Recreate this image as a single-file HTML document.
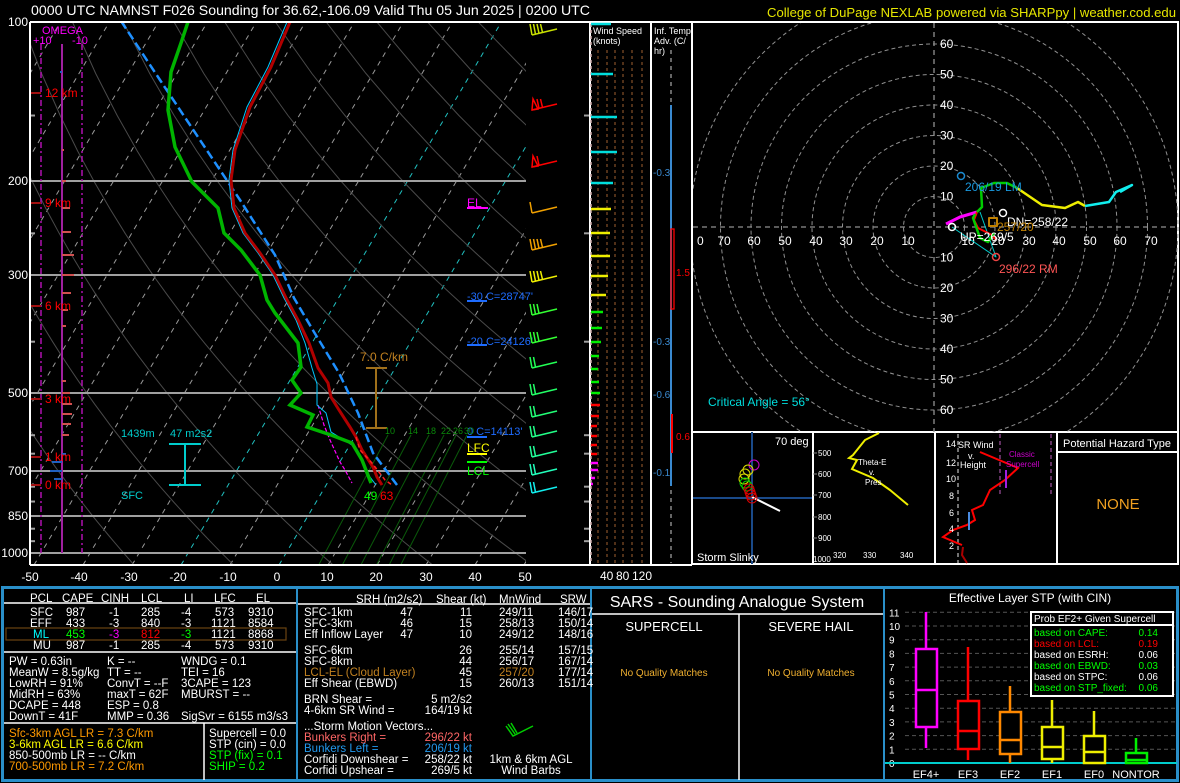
<!DOCTYPE html>
<html><head><meta charset="utf-8">
<style>
html,body{margin:0;padding:0;background:#000;overflow:hidden;width:1180px;height:783px}
svg{display:block}
text{font-family:"Liberation Sans",sans-serif;}
</style></head>
<body>
<svg id="s" width="1180" height="783" viewBox="0 0 1180 783" xmlns="http://www.w3.org/2000/svg">
<defs><clipPath id="skc"><rect x="30" y="22" width="496" height="543"/></clipPath>
<clipPath id="hoc"><rect x="693" y="23" width="486" height="409"/></clipPath></defs>
<rect width="1180" height="783" fill="#000"/>
<text x="31" y="15" fill="#fff" font-size="14" textLength="559" lengthAdjust="spacingAndGlyphs">0000 UTC NAMNST F026 Sounding for 36.62,-106.09 Valid  Thu 05 Jun 2025 | 0200 UTC</text>
<text x="767" y="17" fill="#e6e600" font-size="13" textLength="409" lengthAdjust="spacingAndGlyphs">College of DuPage NEXLAB powered via SHARPpy | weather.cod.edu</text>

<g id="grid" clip-path="url(#skc)"></g>
<g stroke="#a0a0a0" stroke-width="2">
<line x1="30" y1="181" x2="526" y2="181"/><line x1="30" y1="275" x2="526" y2="275"/>
<line x1="30" y1="393" x2="526" y2="393"/><line x1="30" y1="471" x2="526" y2="471"/>
<line x1="30" y1="516" x2="526" y2="516"/><line x1="30" y1="553" x2="526" y2="553"/>
</g>
<g stroke="#a0a0a0" stroke-width="2" id="pticks"></g>
<g font-size="12" fill="#fff" text-anchor="end">
<text x="28" y="26">100</text><text x="28" y="185">200</text><text x="28" y="279">300</text>
<text x="28" y="397">500</text><text x="28" y="475">700</text><text x="28" y="520">850</text><text x="28" y="557">1000</text>
</g>
<g font-size="12" fill="#fff" text-anchor="middle">
<text x="30" y="581">-50</text><text x="79" y="581">-40</text><text x="129" y="581">-30</text><text x="178" y="581">-20</text>
<text x="228" y="581">-10</text><text x="277" y="581">0</text><text x="327" y="581">10</text><text x="376" y="581">20</text>
<text x="426" y="581">30</text><text x="475" y="581">40</text><text x="525" y="581">50</text>
</g>
<line x1="62" y1="44" x2="62" y2="553" stroke="#a020a0" stroke-width="2"/>
<line x1="41" y1="44" x2="41" y2="553" stroke="#b010b0" stroke-width="1.5" stroke-dasharray="6,3,2,3"/>
<line x1="82" y1="44" x2="82" y2="553" stroke="#b010b0" stroke-width="1.5" stroke-dasharray="6,3,2,3"/>
<text x="42" y="34" fill="#f0f" font-size="11">OMEGA</text>
<text x="33" y="44" fill="#f0f" font-size="11">+10</text><text x="72" y="44" fill="#f0f" font-size="11">-10</text>
<g stroke="#d05050" stroke-width="2">
<line x1="62" y1="150" x2="64" y2="150"/><line x1="62" y1="181" x2="66" y2="181"/><line x1="62" y1="208" x2="70" y2="208"/>
<line x1="62" y1="232" x2="71" y2="232"/><line x1="62" y1="255" x2="74" y2="255"/><line x1="62" y1="275" x2="74" y2="275"/>
<line x1="62" y1="293" x2="71" y2="293"/><line x1="62" y1="310" x2="68" y2="310"/><line x1="62" y1="326" x2="66" y2="326"/>
<line x1="62" y1="381" x2="66" y2="381"/><line x1="62" y1="393" x2="70" y2="393"/><line x1="62" y1="404" x2="72" y2="404"/>
<line x1="62" y1="414" x2="72" y2="414"/><line x1="62" y1="424" x2="71" y2="424"/><line x1="62" y1="435" x2="69" y2="435"/>
</g>
<g stroke="#2060c0" stroke-width="2"><line x1="60" y1="72" x2="62" y2="72"/><line x1="62" y1="454" x2="66" y2="454"/><line x1="52" y1="462" x2="62" y2="462"/><line x1="50" y1="471" x2="62" y2="471"/><line x1="54" y1="479" x2="62" y2="479"/></g>
<g stroke="#a01010" stroke-width="2">
<line x1="30" y1="93" x2="41" y2="93"/><line x1="30" y1="203" x2="41" y2="203"/><line x1="30" y1="306" x2="41" y2="306"/>
<line x1="30" y1="399" x2="41" y2="399"/><line x1="30" y1="457" x2="41" y2="457"/><line x1="30" y1="485" x2="41" y2="485"/>
</g>
<g fill="#f00" font-size="12">
<text x="45" y="97">12 km</text><text x="45" y="207">9 km</text><text x="45" y="310">6 km</text>
<text x="45" y="403">3 km</text><text x="45" y="461">1 km</text><text x="45" y="489">0 km</text>
</g>
<g clip-path="url(#skc)" fill="none">
<polyline stroke="#ff00ff" stroke-width="1.2" stroke-dasharray="4,2" points="318,405 324,425 330,440 340,462 345,470 352,483"/>
<polyline stroke="#00c8ff" stroke-width="1" points="287,22 268,67 247,107 233,150 229,180 232,208 243,233 258,253 273,275 284,298 296,320 305,343 312,368 317,384 317,405 326,413 331,432 352,445 362,460 370,477 376,485"/>
<polyline stroke="#1e90ff" stroke-width="2.5" stroke-dasharray="9,4" points="121,21 160,80 200,140 240,200 275,255 294,298 314,332 339,373 358,413 373,453 397,485"/>
<polyline stroke="#b00000" stroke-width="3" points="290,22 271,67 250,107 235,150 231,180 234,208 245,233 260,253 275,275 286,298 298,320 309,343 318,368 328,383 331,397 339,410 350,427 356,437 362,450 373,467 377,477 382,485"/>
<polyline stroke="#ff2020" stroke-width="1.5" stroke-dasharray="4,3" points="356,437 360,450 372,463 385,480 392,485"/>
<polyline stroke="#00b400" stroke-width="3.5" points="188,22 181,43 171,72 168,110 175,147 192,182 205,195 218,208 224,233 241,250 260,275 267,300 275,313 298,343 301,367 292,380 301,393 290,405 313,415 307,427 331,435 352,443 362,460 371,483"/>
</g>
<text x="364" y="500" fill="#0f0" font-size="12">49</text><text x="380" y="500" fill="#f00" font-size="12">63</text>
<text x="467" y="207" fill="#f0f" font-size="12">EL</text><line x1="467" y1="208" x2="488" y2="208" stroke="#f0f" stroke-width="2"/>
<text x="467" y="300" fill="#1e6cff" font-size="11">-30 C=28747'</text><line x1="467" y1="301" x2="487" y2="301" stroke="#1e6cff" stroke-width="2"/>
<text x="467" y="345" fill="#1e6cff" font-size="11">-20 C=24126'</text><line x1="467" y1="345" x2="487" y2="345" stroke="#1e6cff" stroke-width="2"/>
<text x="467" y="435" fill="#1e6cff" font-size="11">0 C=14113'</text><line x1="467" y1="437" x2="487" y2="437" stroke="#1e6cff" stroke-width="2"/>
<text x="467" y="452" fill="#ff0" font-size="12">LFC</text><line x1="467" y1="454" x2="487" y2="454" stroke="#ff0" stroke-width="2"/>
<line x1="467" y1="462" x2="487" y2="462" stroke="#0f0" stroke-width="2"/><text x="467" y="475" fill="#0f0" font-size="12">LCL</text>
<text x="360" y="361" fill="#c08020" font-size="12">7.0 C/km</text>
<g stroke="#a0701a" stroke-width="2"><line x1="376" y1="368" x2="376" y2="428"/><line x1="366" y1="368" x2="387" y2="368"/><line x1="366" y1="428" x2="387" y2="428"/></g>
<text x="121" y="437" fill="#0cc" font-size="11">1439m</text><text x="170" y="437" fill="#0cc" font-size="11">47 m2s2</text>
<g stroke="#0cc" stroke-width="2"><line x1="185" y1="444" x2="185" y2="485"/><line x1="169" y1="444" x2="201" y2="444"/><line x1="169" y1="485" x2="201" y2="485"/></g>
<text x="121" y="499" fill="#0cc" font-size="11">SFC</text>
<g fill="#0a8a0a" font-size="9"><text x="385" y="434">10</text><text x="408" y="434">14</text><text x="426" y="434">18</text><text x="441" y="434">22</text><text x="453" y="434">26</text><text x="464" y="434">30</text></g>
<g id="barbs"></g>
<g stroke="#fff" stroke-width="2" fill="none">
<line x1="30" y1="22" x2="1179" y2="22"/><line x1="30" y1="22" x2="30" y2="565"/><line x1="30" y1="565" x2="692" y2="565"/>
<line x1="590" y1="22" x2="590" y2="565"/><line x1="651" y1="22" x2="651" y2="565"/><line x1="692" y1="22" x2="692" y2="565"/>
<line x1="1178" y1="22" x2="1178" y2="565"/><line x1="692" y1="432" x2="1178" y2="432"/><line x1="692" y1="564" x2="1178" y2="564"/>
<line x1="813" y1="432" x2="813" y2="564"/><line x1="935" y1="432" x2="935" y2="564"/><line x1="1057" y1="432" x2="1057" y2="564"/>
</g>
<g id="wsc" stroke="#6a4020" stroke-width="1.5" stroke-dasharray="3,3"></g>
<text x="593" y="34" fill="#fff" font-size="9">Wind Speed</text><text x="593" y="44" fill="#fff" font-size="9">(knots)</text>
<g id="wsb" stroke-width="2.5"></g>
<g fill="#fff" font-size="12"><text x="600" y="580">40</text><text x="616" y="580">80</text><text x="632" y="580">120</text></g>
<text x="654" y="34" fill="#fff" font-size="9">Inf. Temp.</text><text x="654" y="44" fill="#fff" font-size="9">Adv. (C/</text><text x="654" y="54" fill="#fff" font-size="9">hr)</text>
<line x1="671" y1="50" x2="671" y2="563" stroke="#888" stroke-width="1.5" stroke-dasharray="4,4"/>
<line x1="671" y1="105" x2="671" y2="486" stroke="#3a8ad0" stroke-width="2"/>
<rect x="671" y="229" width="3" height="80" fill="none" stroke="#f00" stroke-width="1.3"/>
<line x1="672" y1="414" x2="672" y2="453" stroke="#f00" stroke-width="2"/>
<g font-size="10"><text x="653" y="176" fill="#3a8ad0">-0.3</text><text x="676" y="276" fill="#f00">1.5</text>
<text x="653" y="345" fill="#3a8ad0">-0.3</text><text x="653" y="398" fill="#3a8ad0">-0.6</text>
<text x="676" y="440" fill="#f00">0.6</text><text x="653" y="476" fill="#3a8ad0">-0.1</text></g>
<g clip-path="url(#hoc)" id="hodo" fill="none" stroke="#909090" stroke-width="1" stroke-dasharray="4,3"></g>
<g stroke="#909090" stroke-dasharray="5,4" stroke-width="1.3"><line x1="934" y1="23" x2="934" y2="432"/><line x1="693" y1="227" x2="1178" y2="227"/></g>
<g fill="#fff" font-size="12" id="hlab"></g>
<g fill="none" stroke-linejoin="round">
<polyline stroke="#00cccc" stroke-width="1" points="952,227 996,257 980,212"/>
<polyline stroke="#f0f" stroke-width="3" points="946,224 960,217 977,212"/>
<polyline stroke="#f00" stroke-width="2" points="977,212 974,220 978,228 992,235 996,240"/>
<polyline stroke="#0c0" stroke-width="2.5" points="977,212 982,207 981,188 994,183 1007,183 1017,188"/>
<polyline stroke="#0c0" stroke-width="2.5" points="975,214 973,218 980,238 988,242 994,233"/>
<polyline stroke="#ee0" stroke-width="2.5" points="1017,188 1042,205 1065,208 1078,202 1085,206"/>
<polyline stroke="#1ee" stroke-width="2.5" points="1085,206 1109,202 1116,192 1132,185 1120,192"/>
<circle cx="1003" cy="213" r="3.5" stroke="#fff" stroke-width="1.5"/><circle cx="952" cy="227" r="3.5" stroke="#fff" stroke-width="1.5"/>
<circle cx="961" cy="176" r="3.5" stroke="#1a8ad0" stroke-width="1.5"/><circle cx="996" cy="257" r="3.5" stroke="#e44" stroke-width="1.5"/>
<rect x="989" y="218" width="8" height="8" stroke="#c08000" stroke-width="2"/>
</g>
<g font-size="12"><text x="965" y="191" fill="#1a9ae0">206/19 LM</text><text x="1007" y="226" fill="#fff">DN=258/22</text>
<text x="997" y="231" fill="#c08000">257/20</text><text x="960" y="241" fill="#fff">UP=269/5</text><text x="999" y="273" fill="#f55">296/22 RM</text>
<text x="708" y="406" fill="#0dd">Critical Angle = 56°</text></g>
<line x1="752" y1="432" x2="752" y2="564" stroke="#1a4a8a" stroke-width="2"/><line x1="693" y1="498" x2="812" y2="498" stroke="#1a4a8a" stroke-width="2"/>
<line x1="752" y1="497" x2="780" y2="511" stroke="#fff" stroke-width="2"/>
<g fill="none" stroke-width="1">
<circle cx="754" cy="465" r="5" stroke="#c0c"/><circle cx="748" cy="470" r="5" stroke="#dd0"/><circle cx="745" cy="474" r="5" stroke="#dd0"/>
<circle cx="744" cy="479" r="5" stroke="#dd0"/><circle cx="745" cy="483" r="5" stroke="#0c0"/><circle cx="747" cy="486" r="5" stroke="#0c0"/>
<circle cx="749" cy="489" r="5" stroke="#d00"/><circle cx="750" cy="492" r="5" stroke="#d00"/><circle cx="751" cy="495" r="5" stroke="#d00"/><circle cx="752" cy="498" r="5" stroke="#d00"/>
</g>
<text x="775" y="445" fill="#fff" font-size="11">70 deg</text><text x="697" y="561" fill="#fff" font-size="11">Storm Slinky</text>
<polyline fill="none" stroke="#ee0" stroke-width="2" points="879,433 865,440 853,455 849,458 857,460 852,469 873,478 890,490 908,505"/>
<g fill="#fff" font-size="8"><text x="818" y="456">500</text><text x="818" y="477">600</text><text x="818" y="498">700</text><text x="818" y="520">800</text><text x="818" y="541">900</text><text x="813" y="562">1000</text>
<text x="833" y="558">320</text><text x="863" y="558">330</text><text x="900" y="558">340</text>
<text x="858" y="465">Theta-E</text><text x="869" y="475">v.</text><text x="865" y="485">Pres</text></g>
<g stroke="#888" stroke-width="1"><line x1="813" y1="453" x2="817" y2="453"/><line x1="813" y1="474" x2="817" y2="474"/><line x1="813" y1="495" x2="817" y2="495"/><line x1="813" y1="517" x2="817" y2="517"/><line x1="813" y1="538" x2="817" y2="538"/></g>
<line x1="958" y1="434" x2="958" y2="563" stroke="#999" stroke-width="1.5" stroke-dasharray="4,3"/>
<line x1="1000" y1="434" x2="1000" y2="495" stroke="#804080" stroke-width="1.5" stroke-dasharray="4,3"/>
<line x1="1051" y1="434" x2="1051" y2="495" stroke="#804080" stroke-width="1.5" stroke-dasharray="4,3"/>
<polyline fill="none" stroke="#f00" stroke-width="2" points="980,452 1018,468 1005,480 990,490 983,505 972,510 975,520 967,525 953,530 943,537 957,543 962,545"/>
<polyline fill="none" stroke="#a00" stroke-width="2" points="963,547 962,555 967,563"/>
<line x1="969" y1="512" x2="969" y2="530" stroke="#4a8ae0" stroke-width="2"/><line x1="1006" y1="470" x2="1006" y2="488" stroke="#a020e0" stroke-width="2"/>
<g fill="#fff" font-size="9"><text x="946" y="447">14</text><text x="946" y="466">12</text><text x="946" y="482">10</text><text x="949" y="499">8</text><text x="949" y="516">6</text><text x="949" y="532">4</text><text x="949" y="549">2</text>
<text x="958" y="448">SR Wind</text><text x="968" y="459">v.</text><text x="960" y="468">Height</text></g>
<g fill="#c0c" font-size="8"><text x="1009" y="457">Classic</text><text x="1006" y="467">Supercell</text></g>
<text x="1117" y="447" fill="#fff" font-size="11" text-anchor="middle">Potential Hazard Type</text>
<line x1="1057" y1="452" x2="1178" y2="452" stroke="#fff" stroke-width="2"/>
<text x="1118" y="509" fill="#f0a020" font-size="15" text-anchor="middle">NONE</text>

<rect x="2.5" y="587.5" width="1175" height="193" fill="none" stroke="#2a8fc9" stroke-width="3"/>
<g stroke="#2a8fc9" stroke-width="2"><line x1="297" y1="587" x2="297" y2="781"/><line x1="591" y1="587" x2="591" y2="781"/><line x1="884" y1="587" x2="884" y2="781"/></g>
<g stroke="#fff" stroke-width="1.5"><line x1="4" y1="603" x2="296" y2="603"/><line x1="4" y1="652" x2="296" y2="652"/><line x1="4" y1="723" x2="296" y2="723"/><line x1="204" y1="723" x2="204" y2="780"/>
<line x1="592" y1="614" x2="883" y2="614"/><line x1="739" y1="614" x2="739" y2="780"/></g>
<rect x="6" y="628" width="280" height="12" fill="none" stroke="#6a4410" stroke-width="1.2"/>
<g font-size="11.5" fill="#fff">
<text x="30" y="602">PCL</text><text x="62" y="602">CAPE</text><text x="101" y="602">CINH</text><text x="141" y="602">LCL</text><text x="184" y="602">LI</text><text x="214" y="602">LFC</text><text x="256" y="602">EL</text>
<text x="30" y="616">SFC</text><text x="66" y="616">987</text><text x="109" y="616">-1</text><text x="141" y="616">285</text><text x="181" y="616">-4</text><text x="215" y="616">573</text><text x="248" y="616">9310</text>
<text x="30" y="627">EFF</text><text x="66" y="627">433</text><text x="109" y="627">-3</text><text x="141" y="627">840</text><text x="181" y="627">-3</text><text x="211" y="627">1121</text><text x="248" y="627">8584</text>
<text x="33" y="638" fill="#0ff">ML</text><text x="66" y="638" fill="#0f0">453</text><text x="109" y="638" fill="#f0f">-3</text><text x="141" y="638" fill="#f00">812</text><text x="181" y="638" fill="#0f0">-3</text><text x="211" y="638">1121</text><text x="248" y="638">8868</text>
<text x="33" y="649">MU</text><text x="66" y="649">987</text><text x="109" y="649">-1</text><text x="141" y="649">285</text><text x="181" y="649">-4</text><text x="215" y="649">573</text><text x="248" y="649">9310</text>
<text x="9" y="665">PW = 0.63in</text><text x="107" y="665">K = --</text><text x="181" y="665">WNDG = 0.1</text>
<text x="9" y="676">MeanW = 8.5g/kg</text><text x="107" y="676">TT = --</text><text x="181" y="676">TEI = 16</text>
<text x="9" y="687">LowRH = 91%</text><text x="107" y="687">ConvT = --F</text><text x="181" y="687">3CAPE = 123</text>
<text x="9" y="698">MidRH = 63%</text><text x="107" y="698">maxT = 62F</text><text x="181" y="698">MBURST = --</text>
<text x="9" y="709">DCAPE = 448</text><text x="107" y="709">ESP = 0.8</text>
<text x="9" y="720">DownT = 41F</text><text x="107" y="720">MMP = 0.36</text><text x="181" y="720">SigSvr = 6155 m3/s3</text>
<text x="9" y="737" fill="#f90">Sfc-3km AGL LR = 7.3 C/km</text><text x="9" y="748" fill="#ff0">3-6km AGL LR = 6.6 C/km</text>
<text x="9" y="759">850-500mb LR = -- C/km</text><text x="9" y="770" fill="#f90">700-500mb LR = 7.2 C/km</text>
<text x="209" y="737">Supercell = 0.0</text><text x="209" y="748">STP (cin) = 0.0</text><text x="209" y="759" fill="#0f0">STP (fix) = 0.1</text><text x="209" y="770" fill="#0f0">SHIP = 0.2</text>
</g>
<line x1="298" y1="604" x2="590" y2="604" stroke="#fff" stroke-width="1.5"/>
<g font-size="11.5" fill="#fff">
<text x="356" y="603">SRH (m2/s2)</text><text x="436" y="603">Shear (kt)</text><text x="499" y="603">MnWind</text><text x="560" y="603">SRW</text>
<text x="304" y="616">SFC-1km</text><text x="304" y="627">SFC-3km</text><text x="304" y="638">Eff Inflow Layer</text>
<text x="304" y="654">SFC-6km</text><text x="304" y="665">SFC-8km</text><text x="304" y="676" fill="#c08020">LCL-EL (Cloud Layer)</text><text x="304" y="687">Eff Shear (EBWD)</text>
<text x="304" y="703">BRN Shear =</text><text x="304" y="714">4-6km SR Wind =</text>
<text x="304" y="730">...Storm Motion Vectors...</text><text x="304" y="741" fill="#f66">Bunkers Right =</text><text x="304" y="752" fill="#29e">Bunkers Left =</text>
<text x="304" y="763">Corfidi Downshear =</text><text x="304" y="774">Corfidi Upshear =</text>
<g text-anchor="end"><text x="413" y="616">47</text><text x="413" y="627">46</text><text x="413" y="638">47</text>
<text x="472" y="616">11</text><text x="472" y="627">15</text><text x="472" y="638">10</text><text x="472" y="654">26</text><text x="472" y="665">44</text><text x="472" y="676">45</text><text x="472" y="687">15</text>
<text x="472" y="703">5 m2/s2</text><text x="472" y="714">164/19 kt</text><text x="472" y="741" fill="#f66">296/22 kt</text><text x="472" y="752" fill="#29e">206/19 kt</text><text x="472" y="763">258/22 kt</text><text x="472" y="774">269/5 kt</text></g>
<text x="499" y="616">249/11</text><text x="499" y="627">258/13</text><text x="499" y="638">249/12</text><text x="499" y="654">255/14</text><text x="499" y="665">256/17</text><text x="499" y="676" fill="#c08020">257/20</text><text x="499" y="687">260/13</text>
<text x="558" y="616">146/17</text><text x="558" y="627">150/14</text><text x="558" y="638">148/16</text><text x="558" y="654">157/15</text><text x="558" y="665">167/14</text><text x="558" y="676">177/14</text><text x="558" y="687">151/14</text>
<text x="531" y="763" text-anchor="middle">1km &amp; 6km AGL</text><text x="531" y="774" text-anchor="middle">Wind Barbs</text>
</g>
<g stroke="#0c0" stroke-width="1.5" fill="none"><polyline points="506,726 513,736 533,726"/><line x1="508" y1="724" x2="515" y2="734"/><line x1="511" y1="723" x2="517" y2="733"/></g>
<text x="737" y="607" fill="#fff" font-size="16" text-anchor="middle">SARS - Sounding Analogue System</text>
<text x="664" y="631" fill="#fff" font-size="13" text-anchor="middle">SUPERCELL</text><text x="811" y="631" fill="#fff" font-size="13" text-anchor="middle">SEVERE HAIL</text>
<text x="664" y="676" fill="#f0b030" font-size="10" text-anchor="middle">No Quality Matches</text><text x="811" y="676" fill="#f0b030" font-size="10" text-anchor="middle">No Quality Matches</text>
<text x="1030" y="602" fill="#fff" font-size="12" text-anchor="middle">Effective Layer STP (with CIN)</text>
<g id="stp"></g>
<line x1="885" y1="763" x2="1177" y2="763" stroke="#0cc" stroke-width="2"/>
<g fill="none" stroke-width="2.5">
<g stroke="#f0f"><line x1="926" y1="748" x2="926" y2="612"/><rect x="916" y="649" width="21" height="78" fill="#000"/><line x1="916" y1="690" x2="937" y2="690"/></g>
<g stroke="#f00"><line x1="968" y1="760" x2="968" y2="647"/><rect x="958" y="701" width="21" height="48" fill="#000"/><line x1="958" y1="731" x2="979" y2="731"/></g>
<g stroke="#f80"><line x1="1010" y1="763" x2="1010" y2="686"/><rect x="1000" y="712" width="21" height="42" fill="#000"/><line x1="1000" y1="740" x2="1021" y2="740"/></g>
<g stroke="#ee0"><line x1="1052" y1="763" x2="1052" y2="700"/><rect x="1042" y="727" width="21" height="32" fill="#000"/><line x1="1042" y1="747" x2="1063" y2="747"/></g>
<g stroke="#ee0"><line x1="1094" y1="763" x2="1094" y2="711"/><rect x="1084" y="736" width="21" height="27" fill="#000"/><line x1="1084" y1="752" x2="1105" y2="752"/></g>
<g stroke="#0e0"><line x1="1136" y1="763" x2="1136" y2="738"/><rect x="1126" y="753" width="21" height="10" fill="#000"/><line x1="1126" y1="760" x2="1147" y2="760"/></g>
</g>
<g fill="#fff" font-size="11" text-anchor="middle"><text x="926" y="778">EF4+</text><text x="968" y="778">EF3</text><text x="1010" y="778">EF2</text><text x="1052" y="778">EF1</text><text x="1094" y="778">EF0</text><text x="1136" y="778">NONTOR</text></g>
<rect x="1031" y="612" width="142" height="84" fill="#000" stroke="#fff" stroke-width="2"/>
<line x1="1031" y1="625" x2="1173" y2="625" stroke="#fff" stroke-width="2"/>
<g font-size="10"><text x="1034" y="622" fill="#fff">Prob EF2+ Given Supercell</text>
<text x="1034" y="636" fill="#0f0">based on CAPE:</text><text x="1034" y="647" fill="#f00">based on LCL:</text><text x="1034" y="658" fill="#fff">based on ESRH:</text>
<text x="1034" y="669" fill="#0f0">based on EBWD:</text><text x="1034" y="680" fill="#fff">based on STPC:</text><text x="1034" y="691" fill="#0f0">based on STP_fixed:</text>
<g text-anchor="end"><text x="1158" y="636" fill="#0f0">0.14</text><text x="1158" y="647" fill="#f00">0.19</text><text x="1158" y="658" fill="#fff">0.06</text>
<text x="1158" y="669" fill="#0f0">0.03</text><text x="1158" y="680" fill="#fff">0.06</text><text x="1158" y="691" fill="#0f0">0.06</text></g></g>
</svg>
<script>
(function(){
var NS="http://www.w3.org/2000/svg";
function el(p,t,a,txt){var e=document.createElementNS(NS,t);for(var k in a)e.setAttribute(k,a[k]);if(txt!=null)e.textContent=txt;p.appendChild(e);return e;}
function Y(p){return 553+230.6*Math.log(p/1000);}
function X(T,y){return 279+4.9*T+0.59*(565-y);}
var g=document.getElementById('grid');
for(var T=-110;T<=50;T+=10){var c=(T==0||T==-20)?'#20c0c0':'#9a9a9a';
el(g,'line',{x1:X(T,565),y1:565,x2:X(T,22),y2:22,stroke:c,'stroke-width':1,'stroke-dasharray':'5,5'});}
for(var th=240;th<=480;th+=20){var pts=[];for(var p=1050;p>=100;p-=25){var t=th*Math.pow(p/1000,0.286)-273.15;var y=Y(p);pts.push(X(t,y).toFixed(1)+','+y.toFixed(1));}
el(g,'polyline',{points:pts.join(' '),fill:'none',stroke:'#4a4a4a','stroke-width':1});}
var mr=[[388,3],[411,5],[429,7],[444,9],[456,11],[467,13]];
mr.forEach(function(m){el(g,'line',{x1:m[0],y1:435,x2:m[0]-0.54*130+m[1]*0.3,y2:565,stroke:'#0a5a0a','stroke-width':1});});
var pt=document.getElementById('pticks');
[150,250,400,600,650,750,800,900,950].forEach(function(p){var y=Y(p);el(pt,'line',{x1:30,y1:y,x2:35,y2:y});el(pt,'line',{x1:584,y1:y,x2:590,y2:y});});
var b=document.getElementById('barbs');
var B=[[30,'#c8e000',4,0],[105,'#f00',2,1],[162,'#f00',1,1],[208,'#f0a000',1,0],[245,'#f0a000',4,0],[277,'#ee0',4,0],[310,'#3f3',3,0],[338,'#3f3',3,0],[363,'#2f5',2,0],[390,'#2f6',2,0],[412,'#2f7',2,0],[432,'#2f8',2,0],[452,'#2f9',2,0],[470,'#2fb',2,0],[488,'#1ee',2,0]];
B.forEach(function(r){var y=r[0],c=r[1];el(b,'line',{x1:532,y1:y+5,x2:557,y2:y-1,stroke:c,'stroke-width':1.6});
if(r[3])el(b,'polygon',{points:(532)+','+(y+5)+' '+(533)+','+(y-6)+' '+(538)+','+(y+4),fill:'none',stroke:c,'stroke-width':1.5});
for(var i=0;i<r[2];i++){var x=532+(r[3]?7:0)+i*3.5;el(b,'line',{x1:x,y1:y+5-(x-532)*0.24,x2:x-2,y2:y-6,stroke:c,'stroke-width':1.5});}});
var w=document.getElementById('wsc');[598,607,615,623,632,642].forEach(function(x){el(w,'line',{x1:x,y1:50,x2:x,y2:563});});
el(w,'line',{x1:591,y1:24,x2:591,y2:563,stroke:'#caa','stroke-dasharray':'3,3'});
var wb=document.getElementById('wsb');
var S=[[24,'#0dd',20],[74,'#0dd',22],[117,'#0dd',26],[152,'#0dd',26],[183,'#0dd',22],[209,'#ee0',20],[233,'#ee0',19],[256,'#ee0',19],[276,'#ee0',17],[295,'#ee0',15],[312,'#0e0',12],[328,'#0e0',11],[342,'#0e0',10],[356,'#0e0',8],[369,'#0e0',7],[382,'#0e0',8],[393,'#0e0',9],[405,'#f00',9],[416,'#f00',8],[426,'#f00',6],[436,'#f00',6],[445,'#f00',6],[454,'#f00',6],[463,'#f0f',7],[470,'#f0f',7],[478,'#f0f',4],[484,'#f0f',2]];
S.forEach(function(s){el(wb,'line',{x1:591,y1:s[0],x2:591+s[2],y2:s[0],stroke:s[1]});});
var h=document.getElementById('hodo');for(var r=1;r<=8;r++)el(h,'circle',{cx:934,cy:227,r:r*30.5});
var hl=document.getElementById('hlab');
[[70,724],[60,754],[50,785],[40,816],[30,846],[20,877],[10,908]].forEach(function(a){el(hl,'text',{x:a[1],y:245,'text-anchor':'middle'},a[0]);});
el(hl,'text',{x:697,y:245},'0');
[[10,968],[20,998],[30,1029],[40,1059],[50,1090],[60,1120],[70,1151]].forEach(function(a){el(hl,'text',{x:a[1],y:245,'text-anchor':'middle'},a[0]);});
[60,50,40,30,20,10].forEach(function(v){el(hl,'text',{x:940,y:227-v*3.05+4},v);el(hl,'text',{x:940,y:227+v*3.05+4},v);});
var st=document.getElementById('stp');
for(var v=0;v<=11;v++){var y=763-v*13.7;if(v>0)el(st,'line',{x1:905,y1:y,x2:1177,y2:y,stroke:'#555','stroke-dasharray':'4,3'});el(st,'text',{x:889,y:y+4,fill:'#fff','font-size':10},v);}
})();
</script>
</body></html>
